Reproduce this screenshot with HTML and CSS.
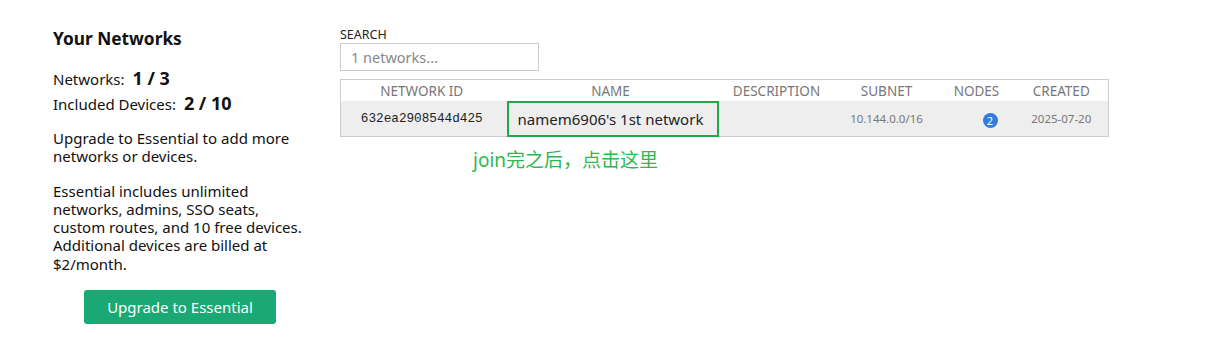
FILE: index.html
```html
<!DOCTYPE html>
<html lang="en">
<head>
    <meta charset="UTF-8">
    <meta name="viewport" content="width=device-width, initial-scale=1.0">
    <title>Networks</title>
    <link rel="stylesheet" href="styles.css">
</head>
<body>
    <div class="page">
        <div class="sidebar">
            <h2 class="title">Your Networks</h2>
            <div class="stat">Networks: <b>1 / 3</b></div>
            <div class="stat">Included Devices: <b>2 / 10</b></div>
            <p class="note first">Upgrade to Essential to add more networks or devices.</p>
            <p class="note">Essential includes unlimited networks, admins, SSO seats, custom routes, and 10 free devices. Additional devices are billed at $2/month.</p>
            <div class="upgrade-wrap">
                <button class="upgrade">Upgrade to Essential</button>
            </div>
        </div>

        <div class="main">
            <label class="search-label" for="search">SEARCH</label>
            <input id="search" class="search" type="text" placeholder="1 networks...">

            <table class="networks">
                <colgroup>
                    <col style="width: 162px">
                    <col style="width: 216px">
                    <col style="width: 116px">
                    <col style="width: 104px">
                    <col style="width: 76px">
                    <col>
                </colgroup>
                <thead>
                    <tr>
                        <th>NETWORK ID</th>
                        <th>NAME</th>
                        <th>DESCRIPTION</th>
                        <th>SUBNET</th>
                        <th>NODES</th>
                        <th>CREATED</th>
                    </tr>
                </thead>
                <tbody>
                    <tr>
                        <td class="net-id">632ea2908544d425</td>
                        <td class="net-name"><span class="highlight"></span>namem6906's 1st network</td>
                        <td></td>
                        <td class="small">10.144.0.0/16</td>
                        <td class="nodes"><span class="badge">2</span></td>
                        <td class="small">2025-07-20</td>
                    </tr>
                </tbody>
            </table>

            <div class="hint">join完之后，点击这里</div>
        </div>
    </div>
</body>
</html>
```

FILE: styles.css
```css
body {
    margin: 0;
    font-family: "Noto Sans", "Open Sans", Arial, sans-serif;
    color: #111;
    background: #fff;
}
.page {
    display: flex;
    padding: 24px 0 0 53px;
}
.sidebar {
    width: 250px;
    margin-right: 37px;
}
.title {
    font-size: 17.3px;
    font-weight: bold;
    margin: 4px 0 16px;
    line-height: 22px;
}
.stat {
    font-size: 15px;
    line-height: 24px;
}
.stat b {
    font-size: 18px;
    margin-left: 4px;
}
.note {
    font-size: 15px;
    line-height: 18.3px;
    margin: 16px 0 0;
}
.note.first {
    margin-top: 13px;
}
.upgrade-wrap {
    margin-top: 17px;
    padding-left: 31px;
}
.upgrade {
    width: 192px;
    height: 34px;
    background-color: #1aa874;
    color: #fff;
    border: none;
    border-radius: 3px;
    font-family: inherit;
    font-size: 15px;
    cursor: pointer;
}
.main {
    width: 769px;
}
.search-label {
    display: block;
    font-size: 12.5px;
    line-height: 16px;
    margin-top: 3px;
    color: #222;
}
.search {
    display: block;
    box-sizing: border-box;
    width: 199px;
    height: 28px;
    margin: 0;
    padding: 0 10px;
    border: 1px solid #ccc;
    font-family: inherit;
    font-size: 14.5px;
}
.search::placeholder {
    color: #888;
}
.networks {
    margin-top: 8px;
    width: 769px;
    table-layout: fixed;
    border-collapse: collapse;
    border: 1px solid #ccc;
}
.networks th {
    font-weight: normal;
    font-size: 13.5px;
    color: #777;
    height: 21px;
    padding: 0;
    text-align: center;
}
.networks td {
    background: #eee;
    height: 35px;
    padding: 0;
    text-align: center;
}
.net-id {
    font-family: "Liberation Mono", "DejaVu Sans Mono", monospace;
    font-size: 12.7px;
    color: #222;
}
.net-name {
    position: relative;
    font-size: 15px;
    color: #222;
}
.highlight {
    position: absolute;
    top: 0;
    left: 4px;
    right: 0;
    bottom: -1px;
    border: 2px solid #22a84a;
}
.small {
    font-size: 11.5px;
    color: #777;
}
.nodes {
    text-align: right !important;
    padding-right: 17px !important;
}
.badge {
    display: inline-block;
    width: 15px;
    height: 15px;
    line-height: 15px;
    border-radius: 50%;
    background: #2f7de1;
    color: #fff;
    font-size: 11px;
    text-align: center;
}
.hint {
    margin: 8px 0 0 133px;
    font-family: "Noto Sans", "Noto Sans CJK SC", sans-serif;
    font-size: 19px;
    color: #2db84f;
}
```
